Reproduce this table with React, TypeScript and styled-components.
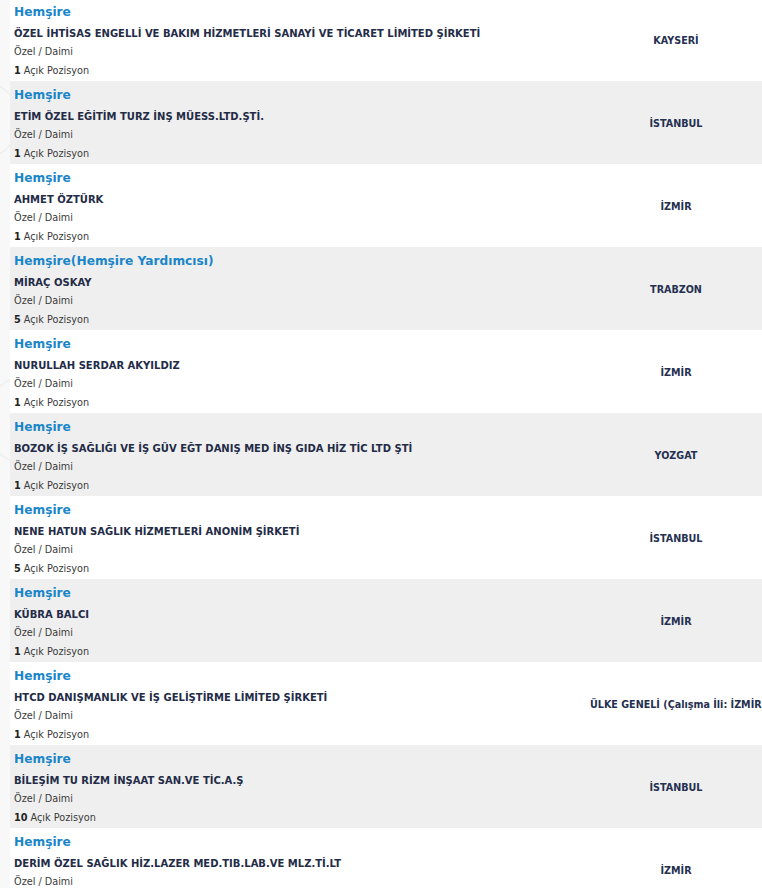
import React from "react";
import styled, { createGlobalStyle } from "styled-components";

interface Job {
  title: string;
  company: string;
  type: string;
  count: number;
  city: string;
}

const jobs: Job[] = [
  { title: "Hemşire", company: "ÖZEL İHTİSAS ENGELLİ VE BAKIM HİZMETLERİ SANAYİ VE TİCARET LİMİTED ŞİRKETİ", type: "Özel / Daimi", count: 1, city: "KAYSERİ" },
  { title: "Hemşire", company: "ETİM ÖZEL EĞİTİM TURZ İNŞ MÜESS.LTD.ŞTİ.", type: "Özel / Daimi", count: 1, city: "İSTANBUL" },
  { title: "Hemşire", company: "AHMET ÖZTÜRK", type: "Özel / Daimi", count: 1, city: "İZMİR" },
  { title: "Hemşire(Hemşire Yardımcısı)", company: "MİRAÇ OSKAY", type: "Özel / Daimi", count: 5, city: "TRABZON" },
  { title: "Hemşire", company: "NURULLAH SERDAR AKYILDIZ", type: "Özel / Daimi", count: 1, city: "İZMİR" },
  { title: "Hemşire", company: "BOZOK İŞ SAĞLIĞI VE İŞ GÜV EĞT DANIŞ MED İNŞ GIDA HİZ TİC LTD ŞTİ", type: "Özel / Daimi", count: 1, city: "YOZGAT" },
  { title: "Hemşire", company: "NENE HATUN SAĞLIK HİZMETLERİ ANONİM ŞİRKETİ", type: "Özel / Daimi", count: 5, city: "İSTANBUL" },
  { title: "Hemşire", company: "KÜBRA BALCI", type: "Özel / Daimi", count: 1, city: "İZMİR" },
  { title: "Hemşire", company: "HTCD DANIŞMANLIK VE İŞ GELİŞTİRME LİMİTED ŞİRKETİ", type: "Özel / Daimi", count: 1, city: "ÜLKE GENELİ (Çalışma İli: İZMİR)" },
  { title: "Hemşire", company: "BİLEŞİM TU RİZM İNŞAAT SAN.VE TİC.A.Ş", type: "Özel / Daimi", count: 10, city: "İSTANBUL" },
  { title: "Hemşire", company: "DERİM ÖZEL SAĞLIK HİZ.LAZER MED.TIB.LAB.VE MLZ.Tİ.LT", type: "Özel / Daimi", count: 1, city: "İZMİR" },
];

export default function App() {
  return (
    <>
      <GlobalStyle />
      <List>
        {jobs.map((job, i) => (
          <Row key={i} $shaded={i % 2 === 1}>
            <Info>
              <Title href="#">{job.title}</Title>
              <Company>{job.company}</Company>
              <Meta>{job.type}</Meta>
              <Meta>
                <b>{job.count}</b> Açık Pozisyon
              </Meta>
            </Info>
            <City>{job.city}</City>
          </Row>
        ))}
      </List>
    </>
  );
}

const GlobalStyle = createGlobalStyle`
  html, body {
    margin: 0;
    padding: 0;
    overflow: hidden;
  }
  body {
    background-color: #f8f8f8;
    background-image:
      radial-gradient(circle at -20px 120px, transparent 38px, #ececec 39px, transparent 40px),
      radial-gradient(circle at 30px 420px, transparent 44px, #ededed 45px, transparent 46px);
    font-family: "DejaVu Sans", Verdana, sans-serif;
  }
`;

const List = styled.div`
  margin: -2px 0 0 10px;
  width: 780px;
`;

const Row = styled.div<{ $shaded: boolean }>`
  display: grid;
  grid-template-columns: 580px 180px;
  align-items: center;
  height: 83px;
  box-sizing: border-box;
  background: ${p => (p.$shaded ? "#efefef" : "#ffffff")};
`;

const Info = styled.div`
  display: flex;
  flex-direction: column;
  align-items: flex-start;
  padding: 5px 0 2px 4px;
`;

const Title = styled.a`
  font-size: 12.2px;
  font-weight: bold;
  line-height: 18px;
  color: #1a86c9;
  text-decoration: none;
`;

const Company = styled.div`
  margin-top: 4px;
  font-size: 10px;
  font-weight: bold;
  line-height: 18px;
  color: #232b46;
  white-space: nowrap;
`;

const Meta = styled.div`
  font-size: 9.7px;
  line-height: 18px;
  color: #3a3a3a;

  &:nth-of-type(3) {
    margin-top: 1px;
  }

  b {
    color: #222;
  }
`;

const City = styled.div`
  text-align: center;
  font-size: 9.6px;
  font-weight: bold;
  color: #253050;
  white-space: nowrap;
  padding-right: 8px;
`;
